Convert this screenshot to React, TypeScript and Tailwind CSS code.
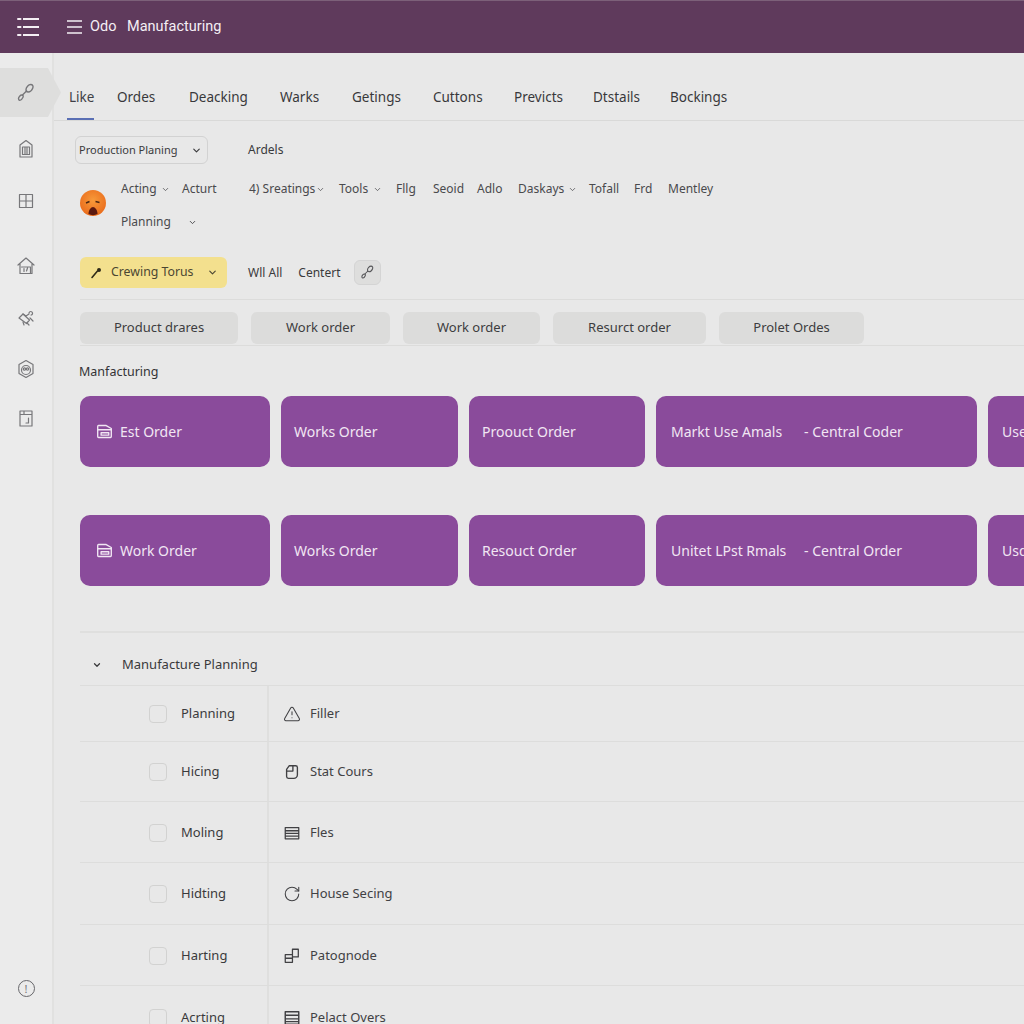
import { ChevronDown, RotateCw, TriangleAlert } from "lucide-react";
import type { ReactNode } from "react";

const tabs = [
  { label: "Like", cls: "w-[48px] text-[#3f3f46]" },
  { label: "Ordes", cls: "w-[72px]" },
  { label: "Deacking", cls: "w-[91px]" },
  { label: "Warks", cls: "w-[72px]" },
  { label: "Getings", cls: "w-[81px]" },
  { label: "Cuttons", cls: "w-[81px]" },
  { label: "Previcts", cls: "w-[79px]" },
  { label: "Dtstails", cls: "w-[77px]" },
  { label: "Bockings", cls: "w-[80px]" },
];

const chips = [
  { label: "Product drares", cls: "w-[158px]" },
  { label: "Work order", cls: "w-[139px]" },
  { label: "Work order", cls: "w-[137px]" },
  { label: "Resurct order", cls: "w-[153px]" },
  { label: "Prolet Ordes", cls: "w-[145px]" },
];

function Svg({ children, cls = "w-5 h-5" }: { children: ReactNode; cls?: string }) {
  return (
    <svg viewBox="0 0 20 20" fill="none" stroke="currentColor" strokeWidth="1.200" strokeLinecap="round" strokeLinejoin="round" className={cls}>
      {children}
    </svg>
  );
}

const LinkIcon = ({ cls }: { cls?: string }) => (
  <Svg cls={cls}>
    <path d="M2.500 15.500c0-1.500 2-3.500 3.200-3.500 1.300 0 1.900 1 1.300 2.300-.7 1.500-2.300 3.200-3.400 3-.8-.2-1.100-1-1.100-1.800z" strokeWidth="1.400" />
    <path d="M6.500 12l4-4" strokeWidth="1.400" />
    <path d="M10 6.500c0-2.200 2.500-5 4.700-5 2 0 2.800 1.700 2.100 3.500-.8 2-2.900 4-4.700 4-1.300 0-2.100-1-2.100-2.500z" strokeWidth="1.400" />
  </Svg>
);

const DocIcon = () => (
  <Svg cls="w-[17px] h-[17px]">
    <path d="M2 4a1 1 0 0 1 1-1h9l6 3.500v9.500a1 1 0 0 1-1 1h-14a1 1 0 0 1-1-1z" strokeWidth="1.600" />
    <path d="M2 8h16M6 11.500h9v2.800h-9z" strokeWidth="1.600" />
  </Svg>
);

const sideIcons = [
  {
    cls: "mt-0",
    icon: (
      <Svg>
        <path d="M10 1.500l6 4.500v12h-12v-12z" />
        <path d="M6.500 8h7v7.500h-7zM9 8v7.500M11 8v7.500" />
      </Svg>
    ),
  },
  {
    cls: "mt-[12px]",
    icon: (
      <Svg>
        <path d="M3.500 3.500h13v13h-13zM3.500 10h13M10 3.500v13" />
      </Svg>
    ),
  },
  {
    cls: "mt-[25px]",
    icon: (
      <Svg>
        <path d="M2 9l8-7 8 7M4 8v9.500h12v-9.500" />
        <path d="M5.500 11h9v6M8 12.500v3M11.500 12l-1 3" />
      </Svg>
    ),
  },
  {
    cls: "mt-[12px]",
    icon: (
      <Svg>
        <path d="M3 10l4-4 6.500 6-3 3.500z" />
        <path d="M7 6l3 2 3-2M13 5c.500-2 3-2 3.500 0 .2 1-.5 2-1.500 2M14 10l3 3M11 15l2 2M7 14l1 3" />
      </Svg>
    ),
  },
  {
    cls: "mt-[11px]",
    icon: (
      <Svg>
        <path d="M10 1.500l7 4v9l-7 4-7-4v-9z" />
        <circle cx="10" cy="11" r="4.500" />
        <circle cx="8.500" cy="10" r="1.200" />
        <circle cx="11.500" cy="10" r="1.200" />
      </Svg>
    ),
  },
  {
    cls: "mt-[9px]",
    icon: (
      <Svg>
        <path d="M4 3h12v15h-12zM4 6.500h12M8 3v3.500" />
        <path d="M10 15h2.500v-5" />
      </Svg>
    ),
  },
];

const topCards = ["Est Order", "Works Order", "Proouct Order"];
const bottomCards = ["Work Order", "Works Order", "Resouct Order"];

const rows: { name: string; label: string; cls: string; pad: string; icon: ReactNode }[] = [
  {
    name: "Planning",
    label: "Filler",
    cls: "h-[56px]",
    pad: "pt-0",
    icon: <TriangleAlert className="w-[18px] h-[18px]" strokeWidth={1.4} />,
  },
  {
    name: "Hicing",
    label: "Stat Cours",
    cls: "h-[60px]",
    pad: "pt-[1px]",
    icon: (
      <Svg cls="w-[18px] h-[18px]">
        <path d="M7 3h7a2 2 0 0 1 2 2v8a4 4 0 0 1-4 4h-6a2 2 0 0 1-2-2v-8z" strokeWidth="1.500" />
        <path d="M11 3v6h-7" strokeWidth="1.500" />
      </Svg>
    ),
  },
  {
    name: "Moling",
    label: "Fles",
    cls: "h-[61px]",
    pad: "pt-[2px]",
    icon: (
      <Svg cls="w-[18px] h-[18px]">
        <path d="M2.500 4h15v12.500h-15zM2.500 7.500h15M2.500 10.500h15M2.500 13.500h15" strokeWidth="1.400" />
      </Svg>
    ),
  },
  {
    name: "Hidting",
    label: "House Secing",
    cls: "h-[62px]",
    pad: "pt-[1px]",
    icon: <RotateCw className="w-[18px] h-[18px]" strokeWidth={1.4} />,
  },
  {
    name: "Harting",
    label: "Patognode",
    cls: "h-[61px]",
    pad: "pt-[2px]",
    icon: (
      <Svg cls="w-[18px] h-[18px]">
        <path d="M2.500 8.500h8v8.500h-8zM2.500 12.500h8M10.500 11h6.500v-8.500h-6.500z" strokeWidth="1.400" />
      </Svg>
    ),
  },
  {
    name: "Acrting",
    label: "Pelact Overs",
    cls: "h-[61px]",
    pad: "pt-[3px]",
    icon: (
      <Svg cls="w-[18px] h-[18px]">
        <path d="M2.500 3h15v14h-15zM2.500 7h15M2.500 11h15M2.500 14h15" strokeWidth="1.600" />
      </Svg>
    ),
  },
];

function CardRow({ labels, wide, last, withIcon }: { labels: string[]; wide: string; last: string; withIcon?: boolean }) {
  return (
    <div className="flex gap-[11px] h-[71px] w-[1000px]">
      {labels.map((label, i) => (
        <div
          key={i}
          className={`flex items-center gap-[7px] rounded-[10px] bg-[#8a4b9b] text-[#f1e6f3] text-[14px] shrink-0 ${
            i === 0 ? "w-[190px] pl-[16px]" : i === 1 ? "w-[177px] pl-[13px]" : "w-[176px] pl-[13px]"
          }`}
        >
          {withIcon && i === 0 && <DocIcon />}
          {label}
        </div>
      ))}
      <div className="flex items-center w-[321px] pl-[15px] rounded-[10px] bg-[#8a4b9b] text-[#f1e6f3] text-[14px] shrink-0">
        <span className="w-[133px]">{wide}</span>
        <span>- Central {wide.startsWith("Mark") ? "Coder" : "Order"}</span>
      </div>
      <div className="flex items-center w-[60px] pl-[14px] rounded-l-[10px] bg-[#8a4b9b] text-[#f1e6f3] text-[14px] shrink-0">
        {last}
      </div>
    </div>
  );
}

export default function App() {
  return (
    <div className="w-[1024px] h-[1024px] overflow-hidden flex flex-col bg-[#e8e8e8] text-[#3a3a3c] font-['Noto_Sans','Liberation_Sans',sans-serif]">
      <header className="h-[53px] shrink-0 flex items-center bg-[#5f3a5c] text-[#f4eff4] border-t border-[#7c6079]">
        <svg viewBox="0 0 22 20" className="w-[22px] h-[20px] ml-[17px]" fill="none" stroke="currentColor" strokeWidth="2">
          <path d="M6 2h16M6 10h16M6 18h16" />
          <path d="M1 2h2.500M1 10h2.500M1 18h2.500" strokeLinecap="round" />
        </svg>
        <svg viewBox="0 0 15 14" className="w-[15px] h-[14px] ml-[28px]" fill="none" stroke="currentColor" strokeWidth="1.300">
          <path d="M0 1h15M0 7h15M0 13h15" />
        </svg>
        <span className="ml-[8px] w-[37px] text-[14.500px] font-['Roboto',sans-serif]">Odo</span>
        <span className="text-[14.500px] font-['Roboto',sans-serif]">Manufacturing</span>
      </header>

      <div className="flex flex-1 min-h-0">
        <aside className="relative w-[54px] shrink-0 flex flex-col items-center border-r-2 border-[#e1e1e0] bg-[#ebebeb] text-[#77777a]">
          <div className="absolute left-0 top-[15px] w-[61px] h-[49px] flex items-center bg-[#dededd] [clip-path:polygon(0_0,48px_0,100%_50%,48px_100%,0_100%)]">
            <span className="ml-[16px] text-[#77777a]">
              <LinkIcon />
            </span>
          </div>
          <div className="h-[76px] shrink-0" />
          {sideIcons.map((item, i) => (
            <div key={i} className={`${item.cls} h-[40px] shrink-0 flex items-center justify-center w-full`}>
              {item.icon}
            </div>
          ))}
          <div className="mt-auto mb-[27px] w-[17px] h-[17px] rounded-full border border-[#66666a] flex items-center justify-center text-[11px] leading-none">
            !
          </div>
        </aside>

        <main className="flex-1 min-w-0 overflow-hidden">
          <nav className="h-[68px] flex items-end border-b border-[#d9d9d8] pl-[15px] text-[13.500px] text-[#38383b]">
            {tabs.map((t, i) => (
              <div key={t.label} className={`relative h-[44px] pt-[9px] leading-[24px] ${t.cls}`}>
                {t.label}
                {i === 0 && <div className="absolute left-[-2px] bottom-0 w-[27px] h-[2px] bg-[#5a6fb4]" />}
              </div>
            ))}
          </nav>

          <div className="pl-[21px] pt-[15px] flex items-center h-[28px] box-content text-[12px]">
            <div className="w-[133px] h-[28px] flex items-center pl-[3px] rounded-[6px] border border-[#d2d2d2] text-[11px]">
              Production Planing
              <ChevronDown className="w-[11px] h-[11px] ml-[14px]" strokeWidth={2.5} />
            </div>
            <span className="ml-[40px]">Ardels</span>
          </div>

          <div className="flex pl-[26px] pt-[15px] text-[12px] text-[#4a4a4d]">
            <div className="mt-[11px] h-[26px] w-[26px] shrink-0">
              <svg viewBox="0 0 26 26" className="w-[26px] h-[26px]">
                <defs>
                  <radialGradient id="face" cx="50%" cy="40%" r="60%">
                    <stop offset="0%" stopColor="#f79a3a" />
                    <stop offset="100%" stopColor="#ea6c1c" />
                  </radialGradient>
                </defs>
                <circle cx="13" cy="13" r="13" fill="url(#face)" />
                <path d="M6 13l3.500-1.500M15.500 11.500l4 1" stroke="#4a2612" strokeWidth="1.400" />
                <path d="M8.500 24c0-4 2.500-7 4.500-7s4.500 3 4.500 7c-2.500 1.500-6.500 1.500-9 0z" fill="#5c1a10" />
              </svg>
            </div>
            <div className="ml-[15px] whitespace-nowrap">
              <div className="flex h-[20px] items-center">
                <span className="w-[40px]">Acting</span>
                <ChevronDown className="w-[9px] h-[9px]" />
                <span className="ml-[12px] w-[67px]">Acturt</span>
                <span className="w-[67px]">4) Sreatings</span>
                <ChevronDown className="w-[9px] h-[9px]" />
                <span className="ml-[14px] w-[34px]">Tools</span>
                <ChevronDown className="w-[9px] h-[9px]" />
                <span className="ml-[14px] w-[37px]">Fllg</span>
                <span className="w-[44px]">Seoid</span>
                <span className="w-[41px]">Adlo</span>
                <span className="w-[50px]">Daskays</span>
                <ChevronDown className="w-[9px] h-[9px]" />
                <span className="ml-[12px] w-[45px]">Tofall</span>
                <span className="w-[34px]">Frd</span>
                <span>Mentley</span>
              </div>
              <div className="flex h-[20px] items-center mt-[13px]">
                <span className="w-[67px]">Planning</span>
                <ChevronDown className="w-[9px] h-[9px]" strokeWidth={2.5} />
              </div>
            </div>
          </div>

          <div className="ml-[26px] mt-[25px] flex items-center h-[31px] text-[12px]">
            <div className="w-[147px] h-[31px] flex items-center rounded-[6px] bg-[#f3e08e] pl-[10px] text-[#4b4632]">
              <svg viewBox="0 0 12 12" className="w-[12px] h-[12px]" fill="none" stroke="#2f2a18" strokeWidth="1.600" strokeLinecap="round">
                <path d="M2 10.500L7.500 4" />
                <circle cx="9" cy="3" r="1.200" fill="#2f2a18" />
              </svg>
              <span className="ml-[9px] w-[82px] whitespace-nowrap text-[12.300px]">Crewing Torus</span>
              <ChevronDown className="w-[11px] h-[11px] ml-[14px]" strokeWidth={2.5} />
            </div>
            <span className="ml-[21px]">Wll All</span>
            <span className="ml-[16px]">Centert</span>
            <div className="ml-[13px] w-[27px] h-[25px] rounded-[6px] bg-[#dededd] border border-[#d4d4d4] flex items-center justify-center text-[#555558]">
              <LinkIcon cls="w-[15px] h-[15px]" />
            </div>
          </div>

          <div className="ml-[26px] mt-[11px] border-t border-[#dcdcdb] pt-[12px] pb-[1px] border-b">
            <div className="flex gap-[13px]">
              {chips.map((c, i) => (
                <div key={i} className={`${c.cls} h-[32px] shrink-0 rounded-[6px] bg-[#dcdcdb] flex items-center justify-center text-[13px] text-[#3d3d40]`}>
                  {c.label}
                </div>
              ))}
            </div>
          </div>

          <div className="ml-[25px] mt-[17px] h-[18px] leading-[18px] text-[12.500px] text-[#333336]">Manfacturing</div>

          <div className="ml-[26px] mt-[15px]">
            <CardRow labels={topCards} wide="Markt Use Amals" last="Use" withIcon />
          </div>
          <div className="ml-[26px] mt-[48px]">
            <CardRow labels={bottomCards} wide="Unitet LPst Rmals" last="Usd" withIcon />
          </div>

          <div className="ml-[26px] mt-[45px] border-t-2 border-[#dfdfde]">
            <div className="h-[53px] pt-[11px] flex items-center border-b border-[#dddddc] text-[13px]">
              <ChevronDown className="w-[10px] h-[10px] ml-[12px]" strokeWidth={3} />
              <span className="ml-[20px]">Manufacture Planning</span>
            </div>
            {rows.map((r) => (
              <div key={r.name} className={`${r.cls} flex items-stretch border-b border-[#dddddc] text-[13px]`}>
                <div className={`${r.pad} w-[189px] shrink-0 border-r-2 border-[#dfdfde] flex items-center pl-[69px]`}>
                  <div className="w-[18px] h-[18px] rounded-[4px] border border-[#d2d2d1] shrink-0" />
                  <span className="ml-[14px]">{r.name}</span>
                </div>
                <div className={`${r.pad} flex items-center pl-[14px] text-[#414144]`}>
                  {r.icon}
                  <span className="ml-[9px]">{r.label}</span>
                </div>
              </div>
            ))}
          </div>
        </main>
      </div>
    </div>
  );
}
